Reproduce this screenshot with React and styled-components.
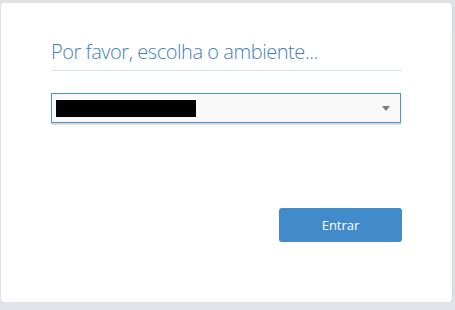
import React from "react";
import styled, { createGlobalStyle } from "styled-components";

const Global = createGlobalStyle`
  html, body { margin: 0; padding: 0; background: #e2e3e9; }
  body { font-family: "Open Sans", "Noto Sans", sans-serif; }
`;

const Page = styled.div`
  width: 455px;
  height: 310px;
  padding: 3px 3px 8px 1px;
  box-sizing: border-box;
  display: flex;
`;

const Card = styled.div`
  flex: 1;
  background: #fff;
  border-radius: 4px;
  box-shadow: 1px 0 0 #d4d6dc;
  padding: 34px 50px 0 50px;
  box-sizing: border-box;
  display: flex;
  flex-direction: column;
`;

const Title = styled.h1`
  margin: 0;
  font-weight: 300;
  font-size: 20px;
  line-height: 30px;
  color: #3f7fc0;
  padding-bottom: 3px;
  border-bottom: 1px solid #d5e2ee;
  letter-spacing: -0.45px;
`;

const Select = styled.div`
  margin-top: 22px;
  height: 30px;
  width: 350px;
  box-sizing: border-box;
  border: 1px solid #4a92cb;
  background: #f9f9f9;
  box-shadow: 0 2px 0 #dcdcdc;
  display: flex;
  align-items: center;
  justify-content: space-between;
  padding: 0 10px 0 4px;
`;

const Redacted = styled.div`
  width: 140px;
  height: 17px;
  background: #000;
`;

const Caret = styled.div`
  width: 0;
  height: 0;
  border-left: 4px solid transparent;
  border-right: 4px solid transparent;
  border-top: 5px solid #7a7a7a;
`;

const Actions = styled.div`
  margin-top: 85px;
  display: flex;
  justify-content: flex-end;
`;

const Button = styled.button`
  width: 123px;
  height: 34px;
  border: none;
  border-radius: 3px;
  background: #428bca;
  color: #fff;
  font-family: "Open Sans", "Noto Sans", sans-serif;
  font-size: 13px;
  padding: 0;
  cursor: pointer;
`;

export default function App() {
  return (
    <>
      <Global />
      <Page>
        <Card>
          <Title>Por favor, escolha o ambiente...</Title>
          <Select>
            <Redacted />
            <Caret />
          </Select>
          <Actions>
            <Button>Entrar</Button>
          </Actions>
        </Card>
      </Page>
    </>
  );
}
